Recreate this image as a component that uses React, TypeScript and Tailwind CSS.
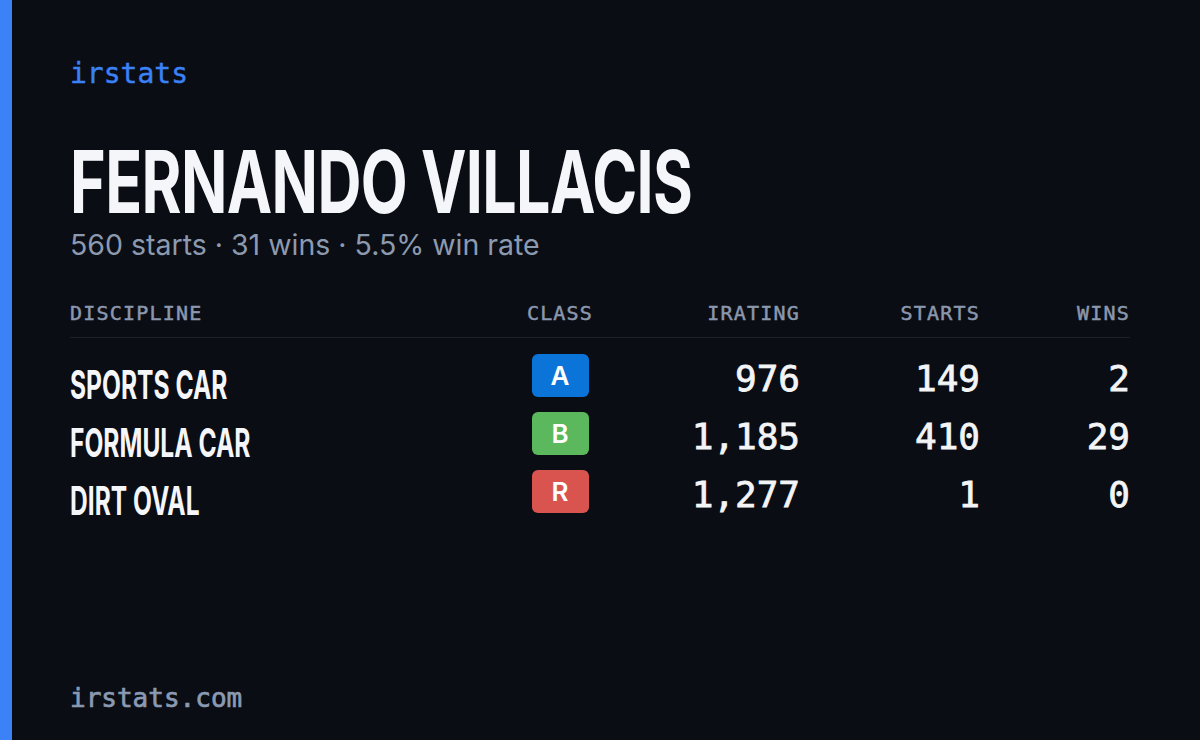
const mono = "font-['DejaVu_Sans_Mono','Liberation_Mono',monospace]"
const sans = "font-['Inter','Noto_Sans',sans-serif]"

type Row = {
  discipline: string
  cls: string
  badge: string
  irating: string
  starts: string
  wins: string
}

const rows: Row[] = [
  { discipline: "SPORTS CAR", cls: "A", badge: "bg-[#0b74d9]", irating: "976", starts: "149", wins: "2" },
  { discipline: "FORMULA CAR", cls: "B", badge: "bg-[#5cb85c]", irating: "1,185", starts: "410", wins: "29" },
  { discipline: "DIRT OVAL", cls: "R", badge: "bg-[#d9534f]", irating: "1,277", starts: "1", wins: "0" },
]

const cols = "grid grid-cols-[430px_120px_180px_180px_150px]"
const num = `${mono} mt-[3px] text-right text-[36px] leading-[44px] text-[#f3f4f6] [-webkit-text-stroke:0.8px_#f3f4f6]`

export default function App() {
  return (
    <div className="flex h-[740px] w-[1200px] bg-[#0a0d14]">
      <div className="w-[12px] bg-[#3b82f6]" />
      <div className="flex flex-1 flex-col pl-[58px] pr-[58px]">
        <div className={`${mono} pt-[57px] text-[28px] leading-[34px] text-[#3b82f6] [-webkit-text-stroke:0.4px_#3b82f6]`}>
          irstats
        </div>

        <h1
          className={`${sans} mt-[51px] h-[80px] origin-left scale-x-[0.7] whitespace-nowrap text-[87px] font-bold leading-[80px] tracking-[-0.01em] text-[#f5f6fa]`}
        >
          FERNANDO VILLACIS
        </h1>

        <p className={`${sans} mt-[6px] text-[28.5px] leading-[34px] text-[#8c9ab0]`}>
          560 starts · 31 wins · 5.5% win rate
        </p>

        <div className="mt-[39px] w-[1060px]">
          <div
            className={`${cols} ${mono} border-b border-[#1c212c] pb-[12px] text-[20px] leading-[24px] tracking-[0.06em] text-[#8a97ad] [-webkit-text-stroke:0.5px_#8a97ad]`}
          >
            <div>DISCIPLINE</div>
            <div className="text-center">CLASS</div>
            <div className="text-right">IRATING</div>
            <div className="text-right">STARTS</div>
            <div className="text-right">WINS</div>
          </div>

          <div className="pt-[16px]">
            {rows.map((row) => (
              <div key={row.discipline} className={`${cols} h-[58px] items-start`}>
                <div
                  className={`${sans} mt-[9px] origin-left scale-x-[0.63] whitespace-nowrap text-[39px] font-bold leading-[44px] text-[#f5f6fa]`}
                >
                  {row.discipline}
                </div>
                <div className="flex justify-center">
                  <div
                    className={`${sans} ${row.badge} flex h-[43px] w-[57px] items-center justify-center rounded-[6px] text-[26px] font-semibold text-white`}
                  >
                    {row.cls}
                  </div>
                </div>
                <div className={num}>{row.irating}</div>
                <div className={num}>{row.starts}</div>
                <div className={num}>{row.wins}</div>
              </div>
            ))}
          </div>
        </div>

        <div className="mt-auto pb-[26px]">
          <span className={`${mono} text-[26px] leading-[32px] text-[#8a9ab2] [-webkit-text-stroke:0.7px_#8a9ab2]`}>
            irstats.com
          </span>
        </div>
      </div>
    </div>
  )
}
